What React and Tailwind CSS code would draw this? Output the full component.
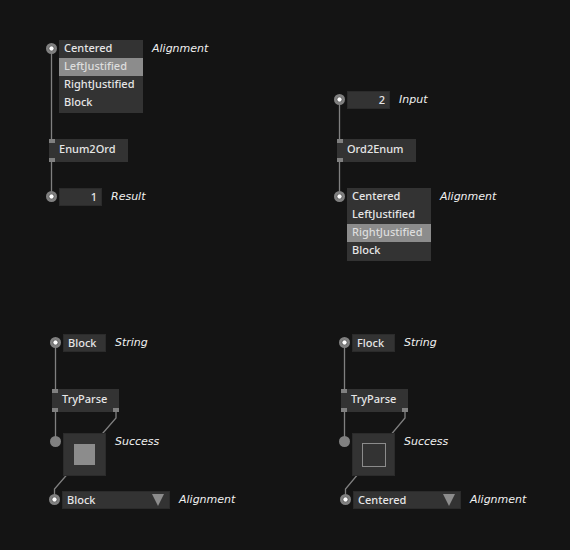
import { useId, useState } from 'react';

const BOX = 'border border-[#2b2b2b] bg-[#333333] text-[#e6e6e6]';

/* An IO box with its socket on the left and its caption on the right. */
function IOBox({ at, caption, id, hollow = true, children }) {
  return (
    <div className={`absolute flex items-start ${at}`}>
      <Socket hollow={hollow} />
      <div className="ml-0.5">{children}</div>
      <label
        htmlFor={id}
        className="ml-[9px] whitespace-nowrap font-['DejaVu_Sans',sans-serif] font-normal italic leading-[18px] text-[#f0f0f0]"
      >
        {caption}
      </label>
    </div>
  );
}

function Socket({ hollow }) {
  return (
    <svg className="mt-[3px] size-[11px] shrink-0" viewBox="0 0 11 11" aria-hidden="true">
      <circle cx="5.5" cy="5.5" r="5.5" fill="#808080" />
      {hollow && <circle cx="5.5" cy="5.5" r="2.8" fill="#4a4a4a" />}
      {hollow && <circle cx="5.5" cy="5.5" r="2.2" fill="#ffffff" />}
    </svg>
  );
}

function EnumList({ at, caption, initial }) {
  const id = useId();
  const [value, setValue] = useState(initial);
  return (
    <IOBox at={at} caption={caption} id={`${id}-Centered`}>
      <div role="radiogroup" aria-label={caption} className="w-[84px] bg-[#333333] pb-px">
        {['Centered', 'LeftJustified', 'RightJustified', 'Block'].map((name) => (
          <label
            key={name}
            htmlFor={`${id}-${name}`}
            className="relative block h-[18px] pl-[5px] leading-4 text-[#e6e6e6] has-checked:bg-[#8c8c8c] has-checked:text-[#dddddd]"
          >
            <input
              type="radio"
              id={`${id}-${name}`}
              name={id}
              checked={value === name}
              onChange={() => setValue(name)}
              className="sr-only"
            />
            {name}
          </label>
        ))}
      </div>
    </IOBox>
  );
}

function ValueBox({ at, caption, value, numeric }) {
  const id = useId();
  return (
    <IOBox at={at} caption={caption} id={id}>
      <input
        id={id}
        type="text"
        defaultValue={value}
        className={`block h-[18px] w-[43px] px-1 pb-0.5 leading-4 outline-none ${BOX} ${numeric ? 'text-right' : ''}`}
      />
    </IOBox>
  );
}

function Toggle({ at, caption, on }) {
  const id = useId();
  return (
    <IOBox at={at} caption={caption} id={id} hollow={false}>
      <div className={`grid size-[43px] place-items-center ${BOX}`}>
        <input
          id={id}
          type="checkbox"
          defaultChecked={on}
          className="size-6 appearance-none border border-[#8c8c8c] checked:size-[21px] checked:bg-[#8c8c8c]"
        />
      </div>
    </IOBox>
  );
}

function DropDown({ at, caption, value }) {
  const id = useId();
  return (
    <IOBox at={at} caption={caption} id={id}>
      <div className="relative">
        <select
          id={id}
          defaultValue={value}
          className={`block h-[18px] w-[108px] appearance-none px-1 leading-4 outline-none ${BOX}`}
        >
          <option>Centered</option>
          <option>LeftJustified</option>
          <option>RightJustified</option>
          <option>Block</option>
        </select>
        <svg className="pointer-events-none absolute right-1.5 top-[3px] size-3" viewBox="0 0 12 12" aria-hidden="true">
          <path d="M0 0H12L6 12Z" fill="#8c8c8c" />
        </svg>
      </div>
    </IOBox>
  );
}

function Pin() {
  return <span className="h-1 w-1.5 bg-[#808080]" />;
}

function Node({ at, width, name, outputs = 1 }) {
  return (
    <div className={`absolute flex h-[23px] flex-col justify-between bg-[#333333] ${width} ${at}`}>
      <div className="flex"><Pin /></div>
      <div className="-mb-0.5 -mt-1.5 pl-2.5 leading-4 text-[#e6e6e6]">{name}</div>
      <div className="flex justify-between">
        <Pin />
        {outputs > 1 && <Pin />}
      </div>
    </div>
  );
}

export default function App() {
  return (
    <main className="relative min-h-screen w-full overflow-hidden bg-[#141414] font-['Noto_Sans','Open_Sans',sans-serif] text-[11px] font-medium">
      <svg className="absolute left-0 top-0 h-[550px] w-[570px]" viewBox="0 0 570 550" fill="none" stroke="#808080" aria-hidden="true">
        <path d="M51.5 48V140M51.5 160V196" strokeWidth="1.3" />
        <path d="M339.5 99V140M339.5 160V196" strokeWidth="1.3" />
        <path d="M55.5 343V391M55.5 411V441M116 411V418L54.5 489V500" strokeWidth="1.3" />
        <path d="M344.5 343V391M344.5 411V441M405 411V418L345.5 489V500" strokeWidth="1.3" />
      </svg>

      <EnumList at="left-[46px] top-[40px]" caption="Alignment" initial="LeftJustified" />
      <Node at="left-[49px] top-[139px]" width="w-[79px]" name="Enum2Ord" />
      <ValueBox at="left-[46px] top-[188px]" caption="Result" value="1" numeric />

      <ValueBox at="left-[334px] top-[91px]" caption="Input" value="2" numeric />
      <Node at="left-[337px] top-[139px]" width="w-[79px]" name="Ord2Enum" />
      <EnumList at="left-[334px] top-[188px]" caption="Alignment" initial="RightJustified" />

      <ValueBox at="left-[50px] top-[334px]" caption="String" value="Block" />
      <Node at="left-[52px] top-[389px]" width="w-[67px]" name="TryParse" outputs={2} />
      <Toggle at="left-[50px] top-[433px]" caption="Success" on />
      <DropDown at="left-[49px] top-[491px]" caption="Alignment" value="Block" />

      <ValueBox at="left-[339px] top-[334px]" caption="String" value="Flock" />
      <Node at="left-[341px] top-[389px]" width="w-[67px]" name="TryParse" outputs={2} />
      <Toggle at="left-[339px] top-[433px]" caption="Success" />
      <DropDown at="left-[340px] top-[491px]" caption="Alignment" value="Centered" />
    </main>
  );
}
